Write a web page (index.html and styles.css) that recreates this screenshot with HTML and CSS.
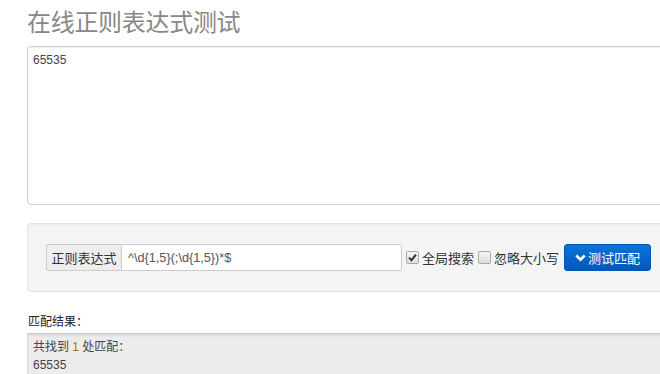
FILE: index.html
```html
<!DOCTYPE html>
<html>
<head>
<meta charset="utf-8">
<title>在线正则表达式测试</title>
<link rel="stylesheet" href="styles.css">
</head>
<body>

<div class="page">
  <h1 class="title">在线正则表达式测试</h1>

  <!-- source text -->
  <div class="source">65535</div>

  <!-- regex toolbar -->
  <div class="well">
    <div class="input-group">
      <span class="addon">正则表达式</span>
      <span class="regex">^\d{1,5}(;\d{1,5})*$</span>
    </div>
    <label class="check">
      <span class="box checked">
        <svg width="9" height="9" viewBox="0 0 9 9"><path d="M1 4.6 L3.5 7.2 L8 1.6" fill="none" stroke="#333" stroke-width="2"/></svg>
      </span>
      全局搜索
    </label>
    <label class="check">
      <span class="box"></span>
      忽略大小写
    </label>
    <button class="btn-test">
      <svg width="11" height="8" viewBox="0 0 11 8"><path d="M1.3 1.5 L5.5 5.7 L9.7 1.5" fill="none" stroke="#fff" stroke-width="2.6"/></svg>
      测试匹配
    </button>
  </div>

  <!-- result -->
  <div class="result-label">匹配结果：</div>
  <div class="result">
    <div>共找到 <span class="count">1</span> 处匹配：</div>
    <div>65535</div>
  </div>
</div>

</body>
</html>
```

FILE: styles.css
```css
html, body {
  overflow: hidden;
}

body {
  margin: 0;
  font-family: "Liberation Sans", "Noto Sans CJK SC", sans-serif;
  font-size: 12px;
  color: #333;
}

.page {
  width: 760px;
  padding-left: 27px;
}

.title {
  margin: 0;
  padding-top: 8px;
  height: 38px;
  font-size: 24px;
  font-weight: normal;
  line-height: 30px;
  color: #888;
  letter-spacing: -0.3px;
}

/* textarea look */
.source {
  height: 146px;
  border: 1px solid #ccc;
  border-radius: 4px;
  padding: 5px 5px 6px 5px;
  font-size: 12px;
  line-height: 16px;
  color: #444;
  box-shadow: inset 0 1px 1px rgba(0,0,0,0.05);
}

.well {
  margin-top: 18px;
  height: 69px;
  background-color: #f4f4f4;
  border: 1px solid #e3e3e3;
  border-radius: 4px;
  padding: 0 18px;
  display: flex;
  align-items: center;
  box-sizing: border-box;
  box-shadow: inset 0 1px 1px rgba(0,0,0,0.03);
}

.input-group {
  display: flex;
  height: 27px;
  width: 356px;
}

.addon {
  width: 74px;
  background-color: #eee;
  border: 1px solid #ccc;
  border-right: none;
  border-radius: 3px 0 0 3px;
  font-size: 13px;
  display: flex;
  align-items: center;
  justify-content: center;
  color: #333;
}

.regex {
  flex: 1;
  background: #fff;
  border: 1px solid #ccc;
  border-radius: 0 3px 3px 0;
  padding-left: 6px;
  display: flex;
  align-items: center;
  color: #555;
  font-size: 12.7px;
}

.check {
  display: flex;
  align-items: center;
  font-size: 13px;
  margin-left: 4px;
  color: #333;
}

.box {
  width: 11px;
  height: 11px;
  border: 1px solid #aaa;
  border-radius: 2px;
  background: linear-gradient(#f4f4f4, #ddd);
  margin-right: 3px;
  display: flex;
  align-items: center;
  justify-content: center;
}

.btn-test {
  margin-left: 5px;
  width: 87px;
  height: 27px;
  border: 1px solid #0057b5;
  border-radius: 3px;
  background: linear-gradient(#0a74d6, #0058bd);
  color: #fff;
  font-family: "Liberation Sans", "Noto Sans CJK SC", sans-serif;
  font-size: 13px;
  display: flex;
  align-items: center;
  justify-content: center;
  gap: 2px;
  padding: 0;
}

.result-label {
  margin-top: 21px;
  font-size: 12px;
  line-height: 18px;
  height: 20px;
  color: #222;
  padding-left: 1px;
}

.result {
  background-color: #ececec;
  border-top: 1px solid #c8c8c8;
  border-left: 1px solid #d8d8d8;
  box-shadow: inset 0 2px 2px rgba(0,0,0,0.08);
  padding: 4px 5px;
  font-size: 12px;
  line-height: 18px;
  height: 60px;
  color: #444;
}

.count {
  color: #b36b00;
}
```
